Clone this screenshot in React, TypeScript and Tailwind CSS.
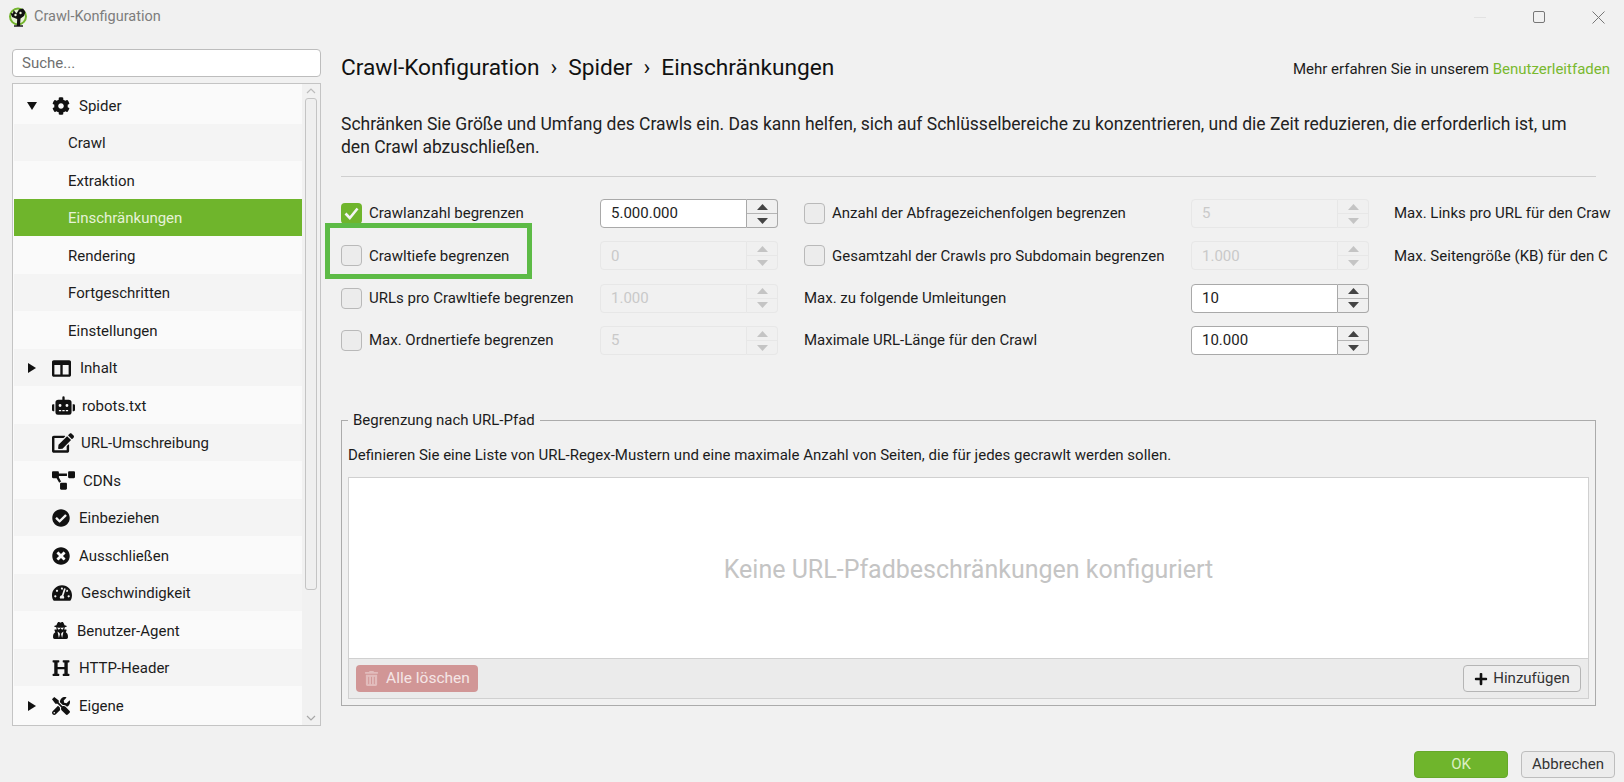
import { ReactNode } from 'react';
import {
  FaCog, FaColumns, FaRobot, FaEdit, FaProjectDiagram, FaCheckCircle, FaTimesCircle,
  FaTachometerAlt, FaUserSecret, FaHeading, FaTools, FaTrashAlt, FaPlus,
} from 'react-icons/fa';

const rows: { label: string; icon?: ReactNode; arrow?: 'down' | 'right'; active?: boolean; gap?: string }[] = [
  { label: 'Spider', icon: <FaCog size={18} />, arrow: 'down', gap: 'ml-[9px]' },
  { label: 'Crawl' },
  { label: 'Extraktion' },
  { label: 'Einschränkungen', active: true },
  { label: 'Rendering' },
  { label: 'Fortgeschritten' },
  { label: 'Einstellungen' },
  { label: 'Inhalt', icon: <FaColumns size={19} />, arrow: 'right', gap: 'ml-[9px]' },
  { label: 'robots.txt', icon: <FaRobot size={23} />, gap: 'ml-[7px]' },
  { label: 'URL-Umschreibung', icon: <FaEdit size={22} />, gap: 'ml-[7px]' },
  { label: 'CDNs', icon: <FaProjectDiagram size={23} />, gap: 'ml-[8px]' },
  { label: 'Einbeziehen', icon: <FaCheckCircle size={18} />, gap: 'ml-[9px]' },
  { label: 'Ausschließen', icon: <FaTimesCircle size={18} />, gap: 'ml-[9px]' },
  { label: 'Geschwindigkeit', icon: <FaTachometerAlt size={20} />, gap: 'ml-[9px]' },
  { label: 'Benutzer-Agent', icon: <FaUserSecret size={17} />, gap: 'ml-[8px]' },
  { label: 'HTTP-Header', icon: <FaHeading size={18} />, gap: 'ml-[9px]' },
  { label: 'Eigene', icon: <FaTools size={18} />, arrow: 'right', gap: 'ml-[9px]' },
];

function Logo() {
  return (
    <svg width="20" height="20" viewBox="0 0 20 20" className="shrink-0">
      <circle cx="10" cy="9.5" r="8" fill="#e8f2d8" stroke="#74b52e" strokeWidth="2" />
      <path d="M8.8 19 L9.2 12 L4 10 L2.5 6 L5 6.5 L5.5 3 L8.5 6.5 L11 2.5 L15 1.5 L17.5 5 L16 9 L12.5 11.5 L12 19 Z" fill="#111" />
      <circle cx="7.5" cy="8" r="1.2" fill="#e8f2d8" />
      <circle cx="12.5" cy="6" r="1.2" fill="#e8f2d8" />
      <path d="M6 19 H15" stroke="#111" strokeWidth="1.4" />
    </svg>
  );
}

function Checkbox({ checked }: { checked?: boolean }) {
  if (checked) {
    return (
      <span className="flex h-[21px] w-[21px] shrink-0 items-center justify-center rounded-[4px] bg-[#6fb52c]">
        <svg width="15" height="13" viewBox="0 0 15 13">
          <path d="M1.5 6.5 L5.8 11 L13.5 1.5" fill="none" stroke="#f4f4f4" strokeWidth="2.6" />
        </svg>
      </span>
    );
  }
  return <span className="h-[21px] w-[21px] shrink-0 rounded-[4px] border border-[#b9b9b9] bg-[#ececec]" />;
}

function Spin({ value, disabled }: { value: string; disabled?: boolean }) {
  const border = disabled ? 'border-[#e7e7e7]' : 'border-[#a9a9a9]';
  const arrow = disabled ? '#c4c4c4' : '#444';
  return (
    <div className="flex h-[29px] w-[178px] shrink-0">
      <div
        className={`flex flex-1 items-center rounded-l-[4px] border pl-[10px] text-[15px] ${border} ${
          disabled ? 'bg-[#f1f1f1] text-[#c9c9c9]' : 'bg-white text-[#222]'
        }`}
      >
        {value}
      </div>
      <div className={`flex w-[31px] flex-col rounded-r-[4px] border border-l-0 ${border} bg-[#f0f0f0]`}>
        <div className={`flex flex-1 items-center justify-center border-b ${disabled ? 'border-[#e7e7e7]' : 'border-[#b5b5b5]'}`}>
          <svg width="11" height="6" viewBox="0 0 11 6"><polygon points="5.5,0 11,6 0,6" fill={arrow} /></svg>
        </div>
        <div className="flex flex-1 items-center justify-center">
          <svg width="11" height="6" viewBox="0 0 11 6"><polygon points="0,0 11,0 5.5,6" fill={arrow} /></svg>
        </div>
      </div>
    </div>
  );
}

function LeftCell({ label, checked, value, disabled, highlight }: { label: string; checked?: boolean; value: string; disabled?: boolean; highlight?: boolean }) {
  return (
    <div className="relative flex w-[437px] shrink-0 items-center">
      <Checkbox checked={checked} />
      <span className="ml-[7px] w-[231px] shrink-0">{label}</span>
      <Spin value={value} disabled={disabled} />
      {highlight && <div className="absolute -left-[16px] -top-[18px] h-[56px] w-[207px] border-[5px] border-[#5dbb46]" />}
    </div>
  );
}

function MidCell({ label, check, value, disabled }: { label: string; check?: boolean; value: string; disabled?: boolean }) {
  return (
    <div className="ml-[26px] flex w-[565px] shrink-0 items-center">
      <div className="flex w-[387px] shrink-0 items-center">
        {check && <Checkbox />}
        <span className={check ? 'ml-[7px]' : ''}>{label}</span>
      </div>
      <Spin value={value} disabled={disabled} />
    </div>
  );
}

export default function App() {
  return (
    <div className="flex h-[782px] w-[1624px] flex-col overflow-hidden bg-[#f1f1f1] font-['Roboto',sans-serif] text-[15px] text-[#1c1c1c]">
      {/* title bar */}
      <div className="flex h-[33px] shrink-0 items-center pl-[8px] pt-[1px]">
        <Logo />
        <span className="ml-[6px] text-[14.5px] text-[#7d7d7d]">Crawl-Konfiguration</span>
        <div className="ml-auto flex items-center pr-[19px]">
          <span className="h-px w-[12px] bg-[#e2e2e2]" />
          <span className="ml-[47px] h-[12px] w-[12px] rounded-[2px] border border-[#777]" />
          <svg width="13" height="13" viewBox="0 0 13 13" className="ml-[47px]">
            <path d="M0.5 0.5 L12.5 12.5 M12.5 0.5 L0.5 12.5" stroke="#777" strokeWidth="1" />
          </svg>
        </div>
      </div>

      <div className="flex min-h-0 flex-1">
        {/* sidebar */}
        <div className="ml-[12px] mt-[16px] w-[309px] shrink-0">
          <div className="flex h-[28px] items-center rounded-[4px] border border-[#bdbdbd] bg-white pl-[9px] text-[#6f6f6f]">Suche...</div>
          <div className="mt-[6px] flex h-[643px] border border-[#c4c4c4] bg-[#fafafa] pl-[1px]">
            <div className="w-[288px] shrink-0 pt-[2px]">
              {rows.map((r, i) => (
                <div
                  key={r.label}
                  className={`flex h-[37.5px] items-center pt-[2px] ${
                    r.active ? 'bg-[#6fb52c] text-[#e6f2d8]' : i % 2 === 0 ? 'bg-[#fafafa]' : 'bg-[#f4f4f4]'
                  }`}
                >
                  <div className="flex w-[38px] shrink-0 items-center justify-center pr-[3px]">
                    {r.arrow === 'down' && <svg width="10" height="8" viewBox="0 0 10 8"><polygon points="0,0 10,0 5,8" fill="#111" /></svg>}
                    {r.arrow === 'right' && <svg width="8" height="10" viewBox="0 0 8 10"><polygon points="0,0 8,5 0,10" fill="#111" /></svg>}
                  </div>
                  {r.icon ? (
                    <>
                      <span className="text-[#111]">{r.icon}</span>
                      <span className={r.gap}>{r.label}</span>
                    </>
                  ) : (
                    <span className="ml-[16px]">{r.label}</span>
                  )}
                </div>
              ))}
            </div>
            {/* scrollbar */}
            <div className="flex flex-1 flex-col items-center bg-[#f1f1f1]">
              <svg width="10" height="6" viewBox="0 0 10 6" className="mt-[4px]"><path d="M1 5 L5 1 L9 5" fill="none" stroke="#bcbcbc" strokeWidth="1.2" /></svg>
              <div className="mt-[4px] h-[492px] w-[12px] rounded-[3px] border border-[#c4c4c4] bg-[#efefef]" />
              <svg width="10" height="6" viewBox="0 0 10 6" className="mb-[4px] mt-auto"><path d="M1 1 L5 5 L9 1" fill="none" stroke="#a8a8a8" strokeWidth="1.2" /></svg>
            </div>
          </div>
        </div>

        {/* main */}
        <div className="ml-[20px] flex w-[1269px] shrink-0 flex-col">
          <div className="mt-[20px] flex h-[30px] items-start justify-between">
            <div className="flex items-center text-[22.7px] leading-[30px] text-[#111]">
              <span>Crawl-Konfiguration</span>
              <span className="mx-[11px]">›</span>
              <span>Spider</span>
              <span className="mx-[11px]">›</span>
              <span>Einschränkungen</span>
            </div>
            <div className="mt-[1px] text-[15px] leading-[30px]">
              Mehr erfahren Sie in unserem <span className="text-[#79b92f]">Benutzerleitfaden</span>
            </div>
          </div>

          <p className="mt-[30px] w-[1250px] text-[17.5px] leading-[22.5px] text-[#222]">
            Schränken Sie Größe und Umfang des Crawls ein. Das kann helfen, sich auf Schlüsselbereiche zu konzentrieren, und die Zeit reduzieren, die erforderlich ist, um den Crawl abzuschließen.
          </p>
          <div className="mt-[18px] h-px w-[1255px] bg-[#cfcfcf]" />

          <div className="mt-[22px] flex flex-col gap-[13.4px] text-[15px]">
            <div className="flex h-[29px] items-center">
              <LeftCell label="Crawlanzahl begrenzen" checked value="5.000.000" />
              <MidCell label="Anzahl der Abfragezeichenfolgen begrenzen" check value="5" disabled />
              <span className="ml-[25px] whitespace-nowrap">Max. Links pro URL für den Craw</span>
            </div>
            <div className="flex h-[29px] items-center">
              <LeftCell label="Crawltiefe begrenzen" value="0" disabled highlight />
              <MidCell label="Gesamtzahl der Crawls pro Subdomain begrenzen" check value="1.000" disabled />
              <span className="ml-[25px] whitespace-nowrap">Max. Seitengröße (KB) für den C</span>
            </div>
            <div className="flex h-[29px] items-center">
              <LeftCell label="URLs pro Crawltiefe begrenzen" value="1.000" disabled />
              <MidCell label="Max. zu folgende Umleitungen" value="10" />
            </div>
            <div className="flex h-[29px] items-center">
              <LeftCell label="Max. Ordnertiefe begrenzen" value="5" disabled />
              <MidCell label="Maximale URL-Länge für den Crawl" value="10.000" />
            </div>
          </div>

          <fieldset className="mt-[55px] h-[296px] w-[1255px] border border-[#ababab] px-[6px] pb-[6px]">
            <legend className="px-[5px] text-[15px] leading-[20px]">Begrenzung nach URL-Pfad</legend>
            <p className="mt-[15px] text-[15px] leading-[20px]">
              Definieren Sie eine Liste von URL-Regex-Mustern und eine maximale Anzahl von Seiten, die für jedes gecrawlt werden sollen.
            </p>
            <div className="mt-[12px] border border-[#d0d0d0]">
              <div className="flex h-[180px] items-center justify-center bg-white pt-[3px] text-[25px] text-[#c4c4c4]">
                Keine URL-Pfadbeschränkungen konfiguriert
              </div>
              <div className="flex h-[40px] items-center justify-between border-t border-[#d0d0d0] bg-[#ebebeb] px-[7px]">
                <button className="flex h-[27px] w-[122px] items-center justify-center rounded-[4px] bg-[#d19696] text-[15.5px] text-[#f5e6e6]">
                  <FaTrashAlt size={15} className="mr-[7px] text-[#e2bcbc]" />
                  Alle löschen
                </button>
                <button className="flex h-[27px] w-[118px] items-center justify-center rounded-[4px] border border-[#b5b5b5] bg-[#eeeeee] text-[15px] text-[#333]">
                  <FaPlus size={14} className="mr-[5px] text-[#111]" />
                  Hinzufügen
                </button>
              </div>
            </div>
          </fieldset>

          <div className="mt-[45px] flex gap-[13px] pl-[1073px] text-[15px]">
            <button className="flex h-[27px] w-[94px] shrink-0 items-center justify-center rounded-[4px] border border-[#66a82a] bg-[#6fb52c] text-[#dcefc4]">OK</button>
            <button className="flex h-[27px] w-[94px] shrink-0 items-center justify-center rounded-[4px] border border-[#bdbdbd] bg-[#ececec] text-[#333]">Abbrechen</button>
          </div>
        </div>
      </div>
    </div>
  );
}
